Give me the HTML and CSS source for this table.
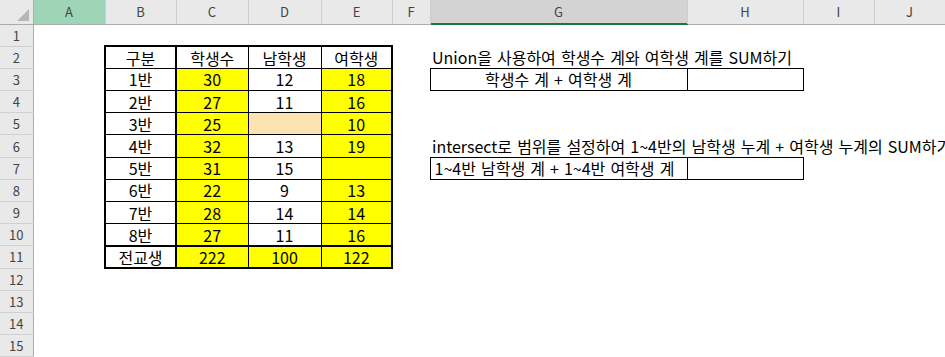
FILE: index.html
```html
<!DOCTYPE html>
<html>
<head>
	<title>Union / Intersect</title>
	<link rel="stylesheet" href="styles.css">
</head>
<body>
	<table class="sheet">
		<colgroup>
			<col style="width:33px"><col style="width:72px"><col style="width:71px"><col style="width:72px">
			<col style="width:73px"><col style="width:71px"><col style="width:38px"><col style="width:257px">
			<col style="width:116px"><col style="width:71px"><col style="width:71px">
		</colgroup>
		<thead>
			<tr class="head">
				<th class="corner"><svg width="12" height="12" viewBox="0 0 12 12"><polygon points="12,0 12,12 0,12" fill="#b7b7b7"/></svg></th>
				<th class="sel-col">A</th>
				<th>B</th>
				<th>C</th>
				<th>D</th>
				<th>E</th>
				<th>F</th>
				<th class="sel-range">G</th>
				<th>H</th>
				<th>I</th>
				<th>J</th>
			</tr>
		</thead>
		<tbody>
			<tr><th class="rh">1</th><td></td><td></td><td></td><td></td><td></td><td></td><td></td><td></td><td></td><td></td></tr>
			<tr>
				<th class="rh">2</th><td></td>
				<td class="c bt bl br">구분</td>
				<td class="c bt">학생수</td>
				<td class="c bt">남학생</td>
				<td class="c bt br">여학생</td>
				<td></td>
				<td class="note">Union을 사용하여 학생수 계와 여학생 계를 SUM하기</td>
				<td></td><td></td><td></td>
			</tr>
			<tr>
				<th class="rh">3</th><td></td>
				<td class="c bl br">1반</td>
				<td class="c yel">30</td>
				<td class="c">12</td>
				<td class="c yel br">18</td>
				<td></td>
				<td class="c">학생수 계 + 여학생 계</td>
				<td class="c"></td>
				<td></td><td></td>
			</tr>
			<tr>
				<th class="rh">4</th><td></td>
				<td class="c bl br">2반</td>
				<td class="c yel">27</td>
				<td class="c">11</td>
				<td class="c yel br">16</td>
				<td></td><td></td><td></td><td></td><td></td>
			</tr>
			<tr>
				<th class="rh">5</th><td></td>
				<td class="c bl br">3반</td>
				<td class="c yel">25</td>
				<td class="c peach"></td>
				<td class="c yel br">10</td>
				<td></td><td></td><td></td><td></td><td></td>
			</tr>
			<tr>
				<th class="rh">6</th><td></td>
				<td class="c bl br">4반</td>
				<td class="c yel">32</td>
				<td class="c">13</td>
				<td class="c yel br">19</td>
				<td></td>
				<td class="note">intersect로 범위를 설정하여 1~4반의 남학생 누계 + 여학생 누계의 SUM하기</td>
				<td></td><td></td><td></td>
			</tr>
			<tr>
				<th class="rh">7</th><td></td>
				<td class="c bl br">5반</td>
				<td class="c yel">31</td>
				<td class="c">15</td>
				<td class="c yel br"></td>
				<td></td>
				<td class="c left">1~4반 남학생 계 + 1~4반 여학생 계</td>
				<td class="c"></td>
				<td></td><td></td>
			</tr>
			<tr>
				<th class="rh">8</th><td></td>
				<td class="c bl br">6반</td>
				<td class="c yel">22</td>
				<td class="c">9</td>
				<td class="c yel br">13</td>
				<td></td><td></td><td></td><td></td><td></td>
			</tr>
			<tr>
				<th class="rh">9</th><td></td>
				<td class="c bl br">7반</td>
				<td class="c yel">28</td>
				<td class="c">14</td>
				<td class="c yel br">14</td>
				<td></td><td></td><td></td><td></td><td></td>
			</tr>
			<tr>
				<th class="rh">10</th><td></td>
				<td class="c bl br">8반</td>
				<td class="c yel">27</td>
				<td class="c">11</td>
				<td class="c yel br">16</td>
				<td></td><td></td><td></td><td></td><td></td>
			</tr>
			<tr>
				<th class="rh">11</th><td></td>
				<td class="c bt bb bl br">전교생</td>
				<td class="c yel bt bb">222</td>
				<td class="c yel bt bb">100</td>
				<td class="c yel bt bb br">122</td>
				<td></td><td></td><td></td><td></td><td></td>
			</tr>
			<tr><th class="rh">12</th><td></td><td></td><td></td><td></td><td></td><td></td><td></td><td></td><td></td><td></td></tr>
			<tr><th class="rh">13</th><td></td><td></td><td></td><td></td><td></td><td></td><td></td><td></td><td></td><td></td></tr>
			<tr><th class="rh">14</th><td></td><td></td><td></td><td></td><td></td><td></td><td></td><td></td><td></td><td></td></tr>
			<tr><th class="rh">15</th><td></td><td></td><td></td><td></td><td></td><td></td><td></td><td></td><td></td><td></td></tr>
		</tbody>
	</table>
</body>
</html>
```

FILE: styles.css
```css
body {
	background-color: #FFF;
	font-family: "Noto Sans CJK KR", "Noto Sans", sans-serif;
	margin: 0;
	padding: 0;
	overflow: hidden;
}
.sheet {
	border-collapse: collapse;
	table-layout: fixed;
	width: 945px;
}
.sheet tbody tr {
	height: 22.2px;
}
.sheet td {
	padding: 0;
	font-size: 16px;
	word-spacing: 1.5px;
	color: #000;
	white-space: nowrap;
	overflow: visible;
	vertical-align: middle;
	line-height: 16px;
}
.head {
	height: 24px;
}
.head th {
	padding: 0;
	background-color: #E9E9E9;
	border-right: 1px solid #CDCDCD;
	border-bottom: 1px solid #ABABAB;
	color: #444;
	font-size: 13px;
	line-height: 13px;
	font-weight: normal;
	text-align: center;
	vertical-align: middle;
}
.head th.corner {
	text-align: right;
	vertical-align: bottom;
	padding: 0 4px 3px 0;
	border-right: 1px solid #ABABAB;
}
.head th.corner svg {
	display: block;
	margin-left: auto;
}
.head th.sel-col {
	background-color: #9FD5B7;
}
.head th.sel-range {
	background-color: #D3D3D3;
	border-bottom: 1px solid #217346;
	box-shadow: inset 0 -1px 0 #217346;
}
.rh {
	padding: 0;
	background-color: #E9E9E9;
	border-right: 1px solid #ABABAB;
	border-bottom: 1px solid #D0D0D0;
	color: #444;
	font-size: 13px;
	line-height: 13px;
	font-weight: normal;
	text-align: center;
}
.c {
	border: 1px solid #000;
	text-align: center;
}
.left {
	text-align: left;
	padding-left: 4px !important;
}
.note {
	text-align: left;
	padding-left: 2px !important;
}
.bt { border-top: 2px solid #000; }
.bb { border-bottom: 2px solid #000; }
.bl { border-left: 2px solid #000; }
.br { border-right: 2px solid #000; }
.yel {
	background-color: #FFFF00;
}
.peach {
	background-color: #FDE3B2;
}
```
